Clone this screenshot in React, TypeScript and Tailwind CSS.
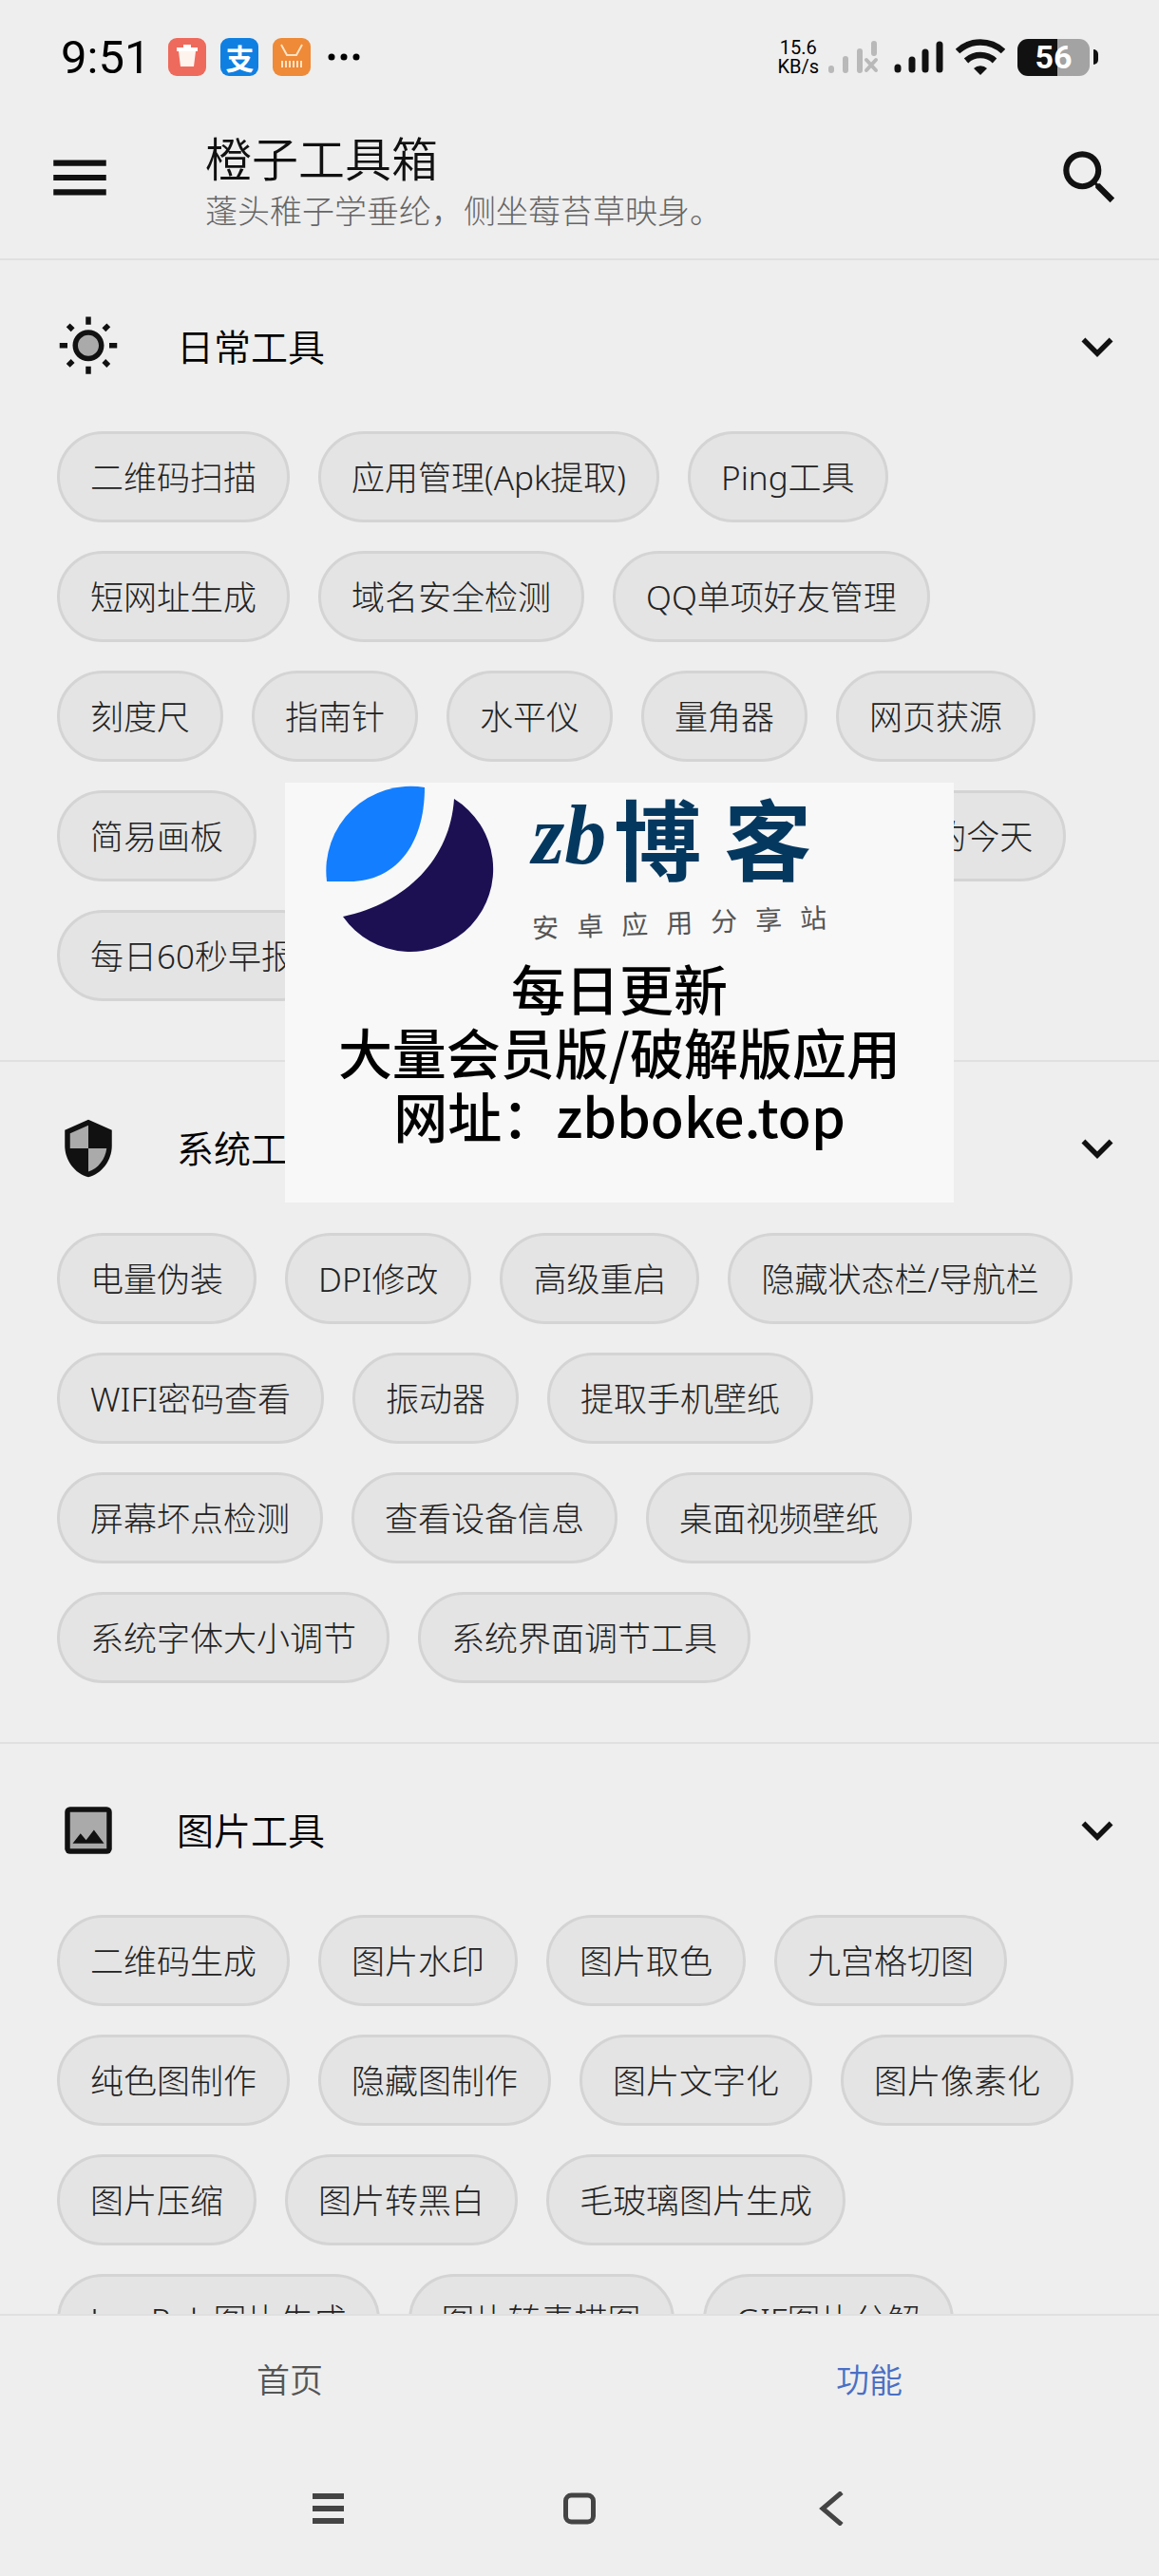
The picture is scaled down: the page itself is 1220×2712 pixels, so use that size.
import React from 'react';
import { MdKeyboardArrowDown, MdMenu, MdSearch } from 'react-icons/md';

function SunIcon() {
    return (
        <svg viewBox="0 0 24 24" className="h-[66px] w-[66px]" fill="#111" aria-hidden="true">
            <circle cx="12" cy="11.5" r="4.5" fill="#aaa" />
            <path d="M5.34 6.25l1.42-1.41-1.8-1.79-1.41 1.41zM1 10.5h3v2H1zM11 .55h2V3.5h-2zm7.66 5.7l-1.41-1.4 1.79-1.8 1.41 1.42zM17.24 18.16l1.79 1.8 1.41-1.41-1.8-1.79zM20 10.5h3v2h-3zm-8-5c-3.31 0-6 2.69-6 6s2.69 6 6 6 6-2.69 6-6-2.69-6-6-6zm0 10c-2.21 0-4-1.79-4-4s1.79-4 4-4 4 1.79 4 4-1.79 4-4 4zm-1 4h2v2.95h-2zm-7.45-.96l1.41 1.41 1.79-1.8-1.41-1.41z" />
        </svg>
    );
}

function ShieldIcon() {
    return (
        <svg viewBox="0 0 24 24" className="h-[66px] w-[66px]" fill="#111" aria-hidden="true">
            <path d="M12 1L3 5v6c0 5.55 3.84 10.74 9 12 5.16-1.26 9-6.45 9-12V5l-9-4z" />
            <path d="M12 12h7c-.53 4.12-3.28 7.79-7 8.94V12H5V6.3l7-3.11z" fill="#aaa" />
        </svg>
    );
}

function PhotoIcon() {
    return (
        <svg viewBox="0 0 24 24" className="h-[66px] w-[66px]" fill="#111" aria-hidden="true">
            <rect x="3" y="3" width="18" height="18" rx="2" />
            <path d="M5 5h14v14H5z" fill="#aaa" />
            <path d="M14.14 11.86l-3 3.87L9 13.14 6 17h12z" />
        </svg>
    );
}

const sections = [
    {
        title: '日常工具',
        icon: <SunIcon />,
        tools: [
            '二维码扫描', '应用管理(Apk提取)', 'Ping工具', '短网址生成', '域名安全检测', 'QQ单项好友管理',
            '刻度尺', '指南针', '水平仪', '量角器', '网页获源', '简易画板', '随机抽签', 'LED滚动字幕',
            '历史上的今天', '每日60秒早报',
        ],
    },
    {
        title: '系统工具',
        icon: <ShieldIcon />,
        tools: [
            '电量伪装', 'DPI修改', '高级重启', '隐藏状态栏/导航栏', 'WIFI密码查看', '振动器', '提取手机壁纸',
            '屏幕坏点检测', '查看设备信息', '桌面视频壁纸', '系统字体大小调节', '系统界面调节工具',
        ],
    },
    {
        title: '图片工具',
        icon: <PhotoIcon />,
        tools: [
            '二维码生成', '图片水印', '图片取色', '九宫格切图', '纯色图制作', '隐藏图制作', '图片文字化',
            '图片像素化', '图片压缩', '图片转黑白', '毛玻璃图片生成', 'LowPoly图片生成', '图片转素描图', 'GIF图片分解',
        ],
    },
];

function StatusBar() {
    return (
        <div className="flex h-[120px] shrink-0 items-center justify-between px-16 text-black">
            <div className="flex items-center gap-[15px]">
                <span className="font-['Roboto',sans-serif] text-[49px] leading-none">9:51</span>
                <svg viewBox="0 0 40 40" className="ml-1 h-10 w-10" aria-hidden="true">
                    <rect width="40" height="40" rx="9" fill="#ee6a5c" />
                    <path d="M9 10h22v4H9zM16 7h8v3h-8z" fill="#fff" />
                    <path d="M11 14h18l-2 16H13z" fill="#fff3ee" />
                </svg>
                <span className="flex h-10 w-10 items-center justify-center rounded-[9px] bg-[#0f80e2] text-[30px] font-bold leading-none text-white">
                    支
                </span>
                <svg viewBox="0 0 40 40" className="h-10 w-10" fill="none" stroke="#ffe3c4" aria-hidden="true">
                    <rect width="40" height="40" rx="9" fill="#ee8a38" stroke="none" />
                    <path d="M9 7l6 11h10l6-11" strokeWidth="2" />
                    <path d="M10 24v7M14 24v7M18 24v7M22 24v7M26 24v7M30 24v7" strokeWidth="2" />
                </svg>
                <svg viewBox="0 0 40 10" className="h-[10px] w-10" aria-hidden="true">
                    <circle cx="7" cy="5" r="3.5" />
                    <circle cx="20" cy="5" r="3.5" />
                    <circle cx="33" cy="5" r="3.5" />
                </svg>
            </div>
            <div className="flex items-center">
                <div className="mr-[9px] text-center font-['Roboto',sans-serif] text-[20px] leading-[20px]">
                    <div>15.6</div>
                    <div>KB/s</div>
                </div>
                <svg viewBox="0 0 54 36" className="mr-[15px] h-9 w-[54px]" stroke="#b9b9b9" strokeWidth="6" strokeLinecap="round" aria-hidden="true">
                    <path d="M4 30v2M19 20v12M34 12v20M49 4v10" />
                    <path d="M41 21l10 11M51 21L41 32" strokeWidth="4" />
                </svg>
                <svg viewBox="0 0 54 36" className="mr-3 h-9 w-[54px]" stroke="#111" strokeWidth="7" strokeLinecap="round" aria-hidden="true">
                    <path d="M5 29v2M20 21v10M34 13v18M49 5v26" />
                </svg>
                <svg viewBox="0 0 52 40" className="mr-[13px] h-10 w-[52px]" fill="none" stroke="#111" strokeWidth="6.5" aria-hidden="true">
                    <path d="M2 14a35 35 0 0 1 48 0M11 24a22 22 0 0 1 30 0" />
                    <path d="M26 39l-7-7a10 10 0 0 1 14 0z" fill="#111" stroke="none" />
                </svg>
                <div className="flex h-[39px] w-[76px] items-center justify-center rounded-[11px] bg-linear-to-r from-[#111] from-55% to-[#a3a3a3] to-55% font-['Roboto',sans-serif] text-[34px] font-bold leading-none text-white">
                    56
                </div>
                <div className="ml-1 h-4 w-[5px] rounded-r-full bg-[#111]" />
            </div>
        </div>
    );
}

function ToolSection({ title, icon, tools }: { title: string; icon: React.ReactNode; tools: string[] }) {
    return (
        <section className="border-b-2 border-[#e0e0e0] pb-[62px] pt-[58px]">
            <button type="button" className="flex w-full items-center pl-[60px] pr-8 text-left">
                {icon}
                <span className="ml-[60px] flex-1 pb-1 text-[39px] font-[350] leading-[62px] text-black">{title}</span>
                <MdKeyboardArrowDown className="h-[66px] w-[66px] text-[#111]" />
            </button>
            <div className="mt-[56px] flex flex-wrap gap-[30px] px-[60px]">
                {tools.map((tool) => (
                    <button
                        key={tool}
                        type="button"
                        className="h-24 rounded-full border-3 border-[#d4d4d4] bg-[#e4e4e4] px-8 font-['Noto_Sans','Noto_Sans_CJK_SC',sans-serif] text-[35px] font-light leading-none text-[#222]"
                    >
                        {tool}
                    </button>
                ))}
            </div>
        </section>
    );
}

function Promo() {
    return (
        <aside className="absolute left-[300px] top-[824px] h-[442px] w-[704px] bg-[#f8f8f8]">
            <div className="flex h-[182px] pl-[40px] pt-[2px]">
                <svg viewBox="0 0 184 180" className="h-[180px] w-[184px]" aria-hidden="true">
                    <path d="M4 102A89 89 0 0 1 107 3C107 65 75 102 28 102z" fill="#137eff" />
                    <path d="M138 15C134 78 88 125 21 139A87 87 0 1 0 138 15z" fill="#1c1053" />
                </svg>
                <div className="ml-[36px]">
                    <div className="flex items-center leading-[108px] text-[#04385f]">
                        <span className="font-['Liberation_Serif',serif] text-[88px] font-bold italic">zb</span>
                        <span className="ml-2 text-[92px] font-bold">博</span>
                        <span className="ml-6 text-[92px] font-bold">客</span>
                    </div>
                    <div className="mt-4 flex -rotate-2 gap-[19px] text-[28px] leading-[40px] text-[#555]">
                        {[...'安卓应用分享站'].map((char) => (
                            <span key={char}>{char}</span>
                        ))}
                    </div>
                </div>
            </div>
            <div className="text-center text-[57px] font-medium leading-[67px] text-black">
                <p>每日更新</p>
                <p>大量会员版/破解版应用</p>
                <p>网址：zbboke.top</p>
            </div>
        </aside>
    );
}

export default function App() {
    return (
        <div className="relative flex h-screen flex-col overflow-hidden bg-[#eee] font-['Noto_Sans_CJK_SC',sans-serif]">
            <StatusBar />

            {/* Header */}
            <header className="flex h-[154px] shrink-0 items-center border-b-2 border-[#e0e0e0] pb-[18px] pl-[47px] pr-[36px]">
                <button type="button" aria-label="菜单">
                    <MdMenu className="h-[74px] w-[74px] text-[#111]" />
                </button>
                <div className="ml-[95px] flex-1 pt-[10px]">
                    <h1 className="text-[49px] font-[350] leading-[58px] text-[#111]">橙子工具箱</h1>
                    <p className="text-[34px] font-light leading-[54px] text-[#666]">蓬头稚子学垂纶，侧坐莓苔草映身。</p>
                </div>
                <button type="button" aria-label="搜索">
                    <MdSearch className="h-[74px] w-[74px] text-[#111]" />
                </button>
            </header>

            {/* Tool list */}
            <main className="min-h-0 flex-1 overflow-y-auto [scrollbar-width:none]">
                {sections.map((section) => (
                    <ToolSection key={section.title} {...section} />
                ))}
            </main>

            {/* Tabs */}
            <nav className="grid h-[138px] shrink-0 grid-cols-2 border-t-2 border-[#e0e0e0] pb-1 text-[35px] font-[350]">
                <a href="#home" className="flex items-center justify-center text-[#555]">首页</a>
                <a href="#tools" className="flex items-center justify-center text-[#4a6fc4]">功能</a>
            </nav>

            {/* System navigation */}
            <div className="flex h-[138px] shrink-0 items-center justify-center gap-[229px] pb-1">
                <button type="button" aria-label="最近任务">
                    <svg viewBox="0 0 36 36" className="h-9 w-9" stroke="#444" strokeWidth="6" aria-hidden="true">
                        <path d="M2 5h33M2 18h33M2 31h33" />
                    </svg>
                </button>
                <button type="button" aria-label="主屏幕">
                    <svg viewBox="0 0 36 36" className="h-9 w-9" fill="none" stroke="#444" strokeWidth="5" aria-hidden="true">
                        <rect x="3.5" y="4" width="29" height="28" rx="6" />
                    </svg>
                </button>
                <button type="button" aria-label="返回">
                    <svg viewBox="0 0 36 36" className="h-9 w-9" fill="none" stroke="#444" strokeWidth="5" aria-hidden="true">
                        <path d="M29 1L9 18l20 17" />
                    </svg>
                </button>
            </div>

            <Promo />
        </div>
    );
}
